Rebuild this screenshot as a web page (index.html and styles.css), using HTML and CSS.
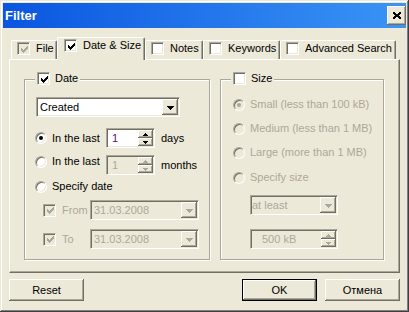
FILE: index.html
```html
<!DOCTYPE html>
<html lang="en">
<head>
<meta charset="UTF-8">
<title>Filter</title>
<link rel="stylesheet" href="styles.css">
</head>
<body>
<div class="window">
  <div class="titlebar">
    <span class="title">Filter</span>
    <div class="close raised">
      <svg width="8" height="7" viewBox="0 0 8 7"><path d="M0 0h2v1h-2z M6 0h2v1h-2z M0 1h3v1h-3z M5 1h3v1h-3z M1 2h6v1h-6z M2 3h4v1h-4z M1 4h6v1h-6z M0 5h3v1h-3z M5 5h3v1h-3z M0 6h2v1h-2z M6 6h2v1h-2z"/></svg>
    </div>
  </div>

  <div class="client">
    <div class="tabs">
      <div class="tab tab-file"><span class="check off"><svg class="tick" width="7" height="7" viewBox="0 0 7 7"><path d="M6 0h1v1h-1z M5 1h2v1h-2z M0 2h1v1h-1z M4 2h3v1h-3z M0 3h2v1h-2z M3 3h3v1h-3z M0 4h5v1h-5z M1 5h3v1h-3z M2 6h1v1h-1z"/></svg></span>File</div>
      <div class="tab tab-date active"><span class="check"><svg class="tick" width="7" height="7" viewBox="0 0 7 7"><path d="M6 0h1v1h-1z M5 1h2v1h-2z M0 2h1v1h-1z M4 2h3v1h-3z M0 3h2v1h-2z M3 3h3v1h-3z M0 4h5v1h-5z M1 5h3v1h-3z M2 6h1v1h-1z"/></svg></span>Date &amp; Size</div>
      <div class="tab tab-notes"><span class="check"></span>Notes</div>
      <div class="tab tab-keys"><span class="check"></span>Keywords</div>
      <div class="tab tab-adv"><span class="check"></span>Advanced Search</div>
    </div>

    <div class="panel">
      <div class="group group-date">
        <div class="group-title"><span class="check"><svg class="tick" width="7" height="7" viewBox="0 0 7 7"><path d="M6 0h1v1h-1z M5 1h2v1h-2z M0 2h1v1h-1z M4 2h3v1h-3z M0 3h2v1h-2z M3 3h3v1h-3z M0 4h5v1h-5z M1 5h3v1h-3z M2 6h1v1h-1z"/></svg></span>Date</div>

        <div class="combo combo-created">
          <span class="combo-text">Created</span>
          <div class="drop raised"><svg width="7" height="4" viewBox="0 0 7 4"><path d="M0 0h7v1h-1v1h-1v1h-1v1h-1v-1h-1v-1h-1v-1h-1z"/></svg></div>
        </div>

        <div class="row row-days">
          <div class="opt"><span class="radio on"></span>In the last</div>
          <div class="spin">
            <span class="spin-val">1</span>
            <div class="spin-btns">
              <div class="sbtn raised"><svg width="5" height="3" viewBox="0 0 5 3"><path d="M2 0h1v1h1v1h1v1h-5v-1h1v-1h1z"/></svg></div>
              <div class="sbtn raised"><svg width="5" height="3" viewBox="0 0 5 3"><path d="M0 0h5v1h-1v1h-1v1h-1v-1h-1v-1h-1z"/></svg></div>
            </div>
          </div>
          <span class="unit">days</span>
        </div>

        <div class="row row-months">
          <div class="opt"><span class="radio"></span>In the last</div>
          <div class="spin-wrap">
            <div class="spin off">
              <span class="spin-val">1</span>
              <div class="spin-btns">
                <div class="sbtn raised"><svg width="5" height="3" viewBox="0 0 5 3"><path d="M2 0h1v1h1v1h1v1h-5v-1h1v-1h1z"/></svg></div>
                <div class="sbtn raised"><svg width="5" height="3" viewBox="0 0 5 3"><path d="M0 0h5v1h-1v1h-1v1h-1v-1h-1v-1h-1z"/></svg></div>
              </div>
            </div>
            <span class="unit">months</span>
          </div>
        </div>

        <div class="row row-specify">
          <div class="opt opt-wide"><span class="radio"></span>Specify date</div>
        </div>

        <div class="row date-row row-from">
          <span class="check off"><svg class="tick" width="7" height="7" viewBox="0 0 7 7"><path d="M6 0h1v1h-1z M5 1h2v1h-2z M0 2h1v1h-1z M4 2h3v1h-3z M0 3h2v1h-2z M3 3h3v1h-3z M0 4h5v1h-5z M1 5h3v1h-3z M2 6h1v1h-1z"/></svg></span>
          <span class="dlabel">From</span>
          <div class="combo combo-date off">
            <span class="combo-text">31.03.2008</span>
            <div class="drop raised"><svg width="7" height="4" viewBox="0 0 7 4"><path d="M0 0h7v1h-1v1h-1v1h-1v1h-1v-1h-1v-1h-1v-1h-1z"/></svg></div>
          </div>
        </div>

        <div class="row date-row row-to">
          <span class="check off"><svg class="tick" width="7" height="7" viewBox="0 0 7 7"><path d="M6 0h1v1h-1z M5 1h2v1h-2z M0 2h1v1h-1z M4 2h3v1h-3z M0 3h2v1h-2z M3 3h3v1h-3z M0 4h5v1h-5z M1 5h3v1h-3z M2 6h1v1h-1z"/></svg></span>
          <span class="dlabel">To</span>
          <div class="combo combo-date off">
            <span class="combo-text">31.03.2008</span>
            <div class="drop raised"><svg width="7" height="4" viewBox="0 0 7 4"><path d="M0 0h7v1h-1v1h-1v1h-1v1h-1v-1h-1v-1h-1v-1h-1z"/></svg></div>
          </div>
        </div>
      </div>

      <div class="group group-size">
        <div class="group-title"><span class="check"></span>Size</div>

        <div class="opt size-opt first"><span class="radio on off"></span>Small (less than 100 kB)</div>
        <div class="opt size-opt"><span class="radio off"></span>Medium (less than 1 MB)</div>
        <div class="opt size-opt"><span class="radio off"></span>Large (more than 1 MB)</div>
        <div class="opt size-opt last"><span class="radio off"></span>Specify size</div>

        <div class="combo combo-least off">
          <span class="combo-text">at least</span>
          <div class="drop raised"><svg width="7" height="4" viewBox="0 0 7 4"><path d="M0 0h7v1h-1v1h-1v1h-1v1h-1v-1h-1v-1h-1v-1h-1z"/></svg></div>
        </div>

        <div class="spin spin-size off">
          <span class="spin-val">500 kB</span>
          <div class="spin-btns">
            <div class="sbtn raised"><svg width="5" height="3" viewBox="0 0 5 3"><path d="M2 0h1v1h1v1h1v1h-5v-1h1v-1h1z"/></svg></div>
            <div class="sbtn raised"><svg width="5" height="3" viewBox="0 0 5 3"><path d="M0 0h5v1h-1v1h-1v1h-1v-1h-1v-1h-1z"/></svg></div>
          </div>
        </div>
      </div>
    </div>

    <div class="buttons">
      <div class="btn raised">Reset</div>
      <div class="btn btn-default">OK</div>
      <div class="btn raised">Отмена</div>
    </div>
  </div>
</div>
</body>
</html>
```

FILE: styles.css
```css
body {
    margin: 0;
    font-family: "Liberation Sans", Arial, sans-serif;
    font-size: 11px;
    color: #000;
}

.window {
    width: 409px;
    height: 312px;
    box-sizing: border-box;
    padding: 3px;
    background: #ece9d8;
    box-shadow: inset -1px -1px #404040, inset 1px 1px #ece9d8,
                inset -2px -2px #808080, inset 2px 2px #fff;
}

/* title bar */
.titlebar {
    height: 25px;
    display: flex;
    align-items: center;
    justify-content: space-between;
    padding: 0 0 0 2px;
    background: linear-gradient(to right, #0a56e0, #3b94f5);
}
.title {
    color: #fff;
    font-weight: bold;
    font-size: 13px;
}
.close {
    width: 19px;
    height: 19px;
    box-sizing: border-box;
    display: flex;
    align-items: center;
    justify-content: center;
}

.raised {
    background: #ece9d8;
    box-shadow: inset -1px -1px #716f64, inset 1px 1px #fff,
                inset -2px -2px #aca899, inset 2px 2px #ece9d8;
}

.client {
    padding: 9px 6px 0;
}

/* tabs */
.tabs {
    display: flex;
    align-items: flex-end;
    height: 22px;
    padding-left: 2px;
}
.tab {
    box-sizing: border-box;
    height: 19px;
    border: 1px solid #fff;
    border-bottom: 0;
    border-right-color: #716f64;
    border-radius: 2px 2px 0 0;
    box-shadow: inset -1px 0 #aca899;
    display: flex;
    align-items: flex-start;
    gap: 6px;
    padding: 1px 0 0 5px;
    line-height: 13px;
    white-space: nowrap;
}
.tab.active {
    height: 23px;
    margin-bottom: -1px;
    padding-left: 6px;
    position: relative;
    z-index: 1;
    background: #ece9d8;
}
.tab-file { width: 46px; }
.tab-date { width: 88px; }
.tab-notes { width: 58px; }
.tab-keys { width: 77px; }
.tab-adv { width: 116px; }

/* checkbox + radio */
.check {
    width: 13px;
    height: 13px;
    flex: none;
    box-sizing: border-box;
    border: 1px solid;
    border-color: #aca899 #fff #fff #aca899;
    box-shadow: inset 1px 1px #716f64, inset -1px -1px #ece9d8;
    background: #fff;
    display: flex;
    align-items: center;
    justify-content: center;
    padding: 1px 0 0 1px;
}
.check.off {
    background: #ece9d8;
    color: #aca899;
}
.tick {
    fill: currentColor;
}

.radio {
    width: 12px;
    height: 12px;
    flex: none;
    box-sizing: border-box;
    border-radius: 50%;
    border: 1px solid;
    border-color: #aca899 #fff #fff #aca899;
    box-shadow: inset 1px 1px #716f64, inset -1px -1px #ece9d8;
    background: #fff;
    display: flex;
    align-items: center;
    justify-content: center;
}
.radio.on::after {
    content: "";
    width: 4px;
    height: 4px;
    border-radius: 50%;
    background: #000;
}
.radio.off {
    background: #ece9d8;
}
.radio.on.off::after {
    background: #aca899;
}

/* panel */
.panel {
    height: 214px;
    box-sizing: border-box;
    border: 1px solid #fff;
    border-right-color: #716f64;
    border-bottom-color: #716f64;
    box-shadow: inset -1px -1px #aca899;
    display: flex;
    gap: 10px;
    padding: 19px 15px 0 14px;
}

.group {
    position: relative;
    box-sizing: border-box;
    height: 181px;
    border: 1px solid #aca899;
    box-shadow: inset 1px 1px #fff, 1px 1px #fff;
}
.group-date {
    width: 186px;
    padding: 17px 0 0 10px;
}
.group-size {
    width: 164px;
    padding: 18px 0 0 12px;
    color: #aca899;
}
.group-title {
    position: absolute;
    top: -8px;
    left: 10px;
    height: 13px;
    line-height: 13px;
    padding: 0 2px;
    background: #ece9d8;
    color: #000;
    display: flex;
    align-items: center;
    gap: 5px;
}

/* combo boxes */
.combo {
    box-sizing: border-box;
    height: 20px;
    border: 1px solid;
    border-color: #aca899 #fff #fff #aca899;
    box-shadow: inset 1px 1px #716f64, inset -1px -1px #ece9d8;
    background: #fff;
    padding: 1px;
    display: flex;
}
.combo-text {
    flex: 1;
    line-height: 16px;
    padding-left: 2px;
}
.drop {
    width: 16px;
    height: 16px;
    display: flex;
    align-items: center;
    justify-content: center;
    padding-top: 1px;
    box-sizing: border-box;
}
.combo.off {
    background: #ece9d8;
    color: #aca899;
}
.combo.off svg,
.spin.off svg {
    fill: #aca899;
}
.combo-created {
    width: 144px;
    margin-left: 1px;
}
.combo-date {
    width: 109px;
}
.combo-least {
    width: 88px;
    margin: 11px 0 0 17px;
}
.combo-least .combo-text {
    padding-left: 0;
}

/* spin edits */
.spin {
    width: 49px;
    height: 20px;
    flex: none;
    box-sizing: border-box;
    border: 1px solid;
    border-color: #aca899 #fff #fff #aca899;
    box-shadow: inset 1px 1px #716f64, inset -1px -1px #ece9d8;
    background: #fff;
    padding: 1px;
    display: flex;
}
.spin-val {
    flex: 1;
    line-height: 16px;
    padding-left: 4px;
    color: #50107a;
}
.spin.off {
    background: #ece9d8;
}
.spin.off .spin-val {
    color: #aca899;
}
.spin-btns {
    width: 15px;
    display: flex;
    flex-direction: column;
}
.sbtn {
    height: 8px;
    display: flex;
    align-items: center;
    justify-content: center;
}
.spin-size {
    width: 88px;
    margin: 14px 0 0 17px;
}
.spin-size .spin-val {
    padding-left: 10px;
}

/* rows in date group */
.row {
    display: flex;
    align-items: center;
}
.opt {
    display: flex;
    align-items: center;
    gap: 5px;
    height: 13px;
    line-height: 13px;
    white-space: nowrap;
}
.row .opt {
    width: 71px;
}
.row .opt-wide {
    width: auto;
}
.row-days {
    margin-top: 11px;
    height: 20px;
}
.row-months {
    margin-top: 7px;
    align-items: flex-start;
}
.spin-wrap {
    display: flex;
    align-items: center;
}
.unit {
    margin-left: 6px;
}
.row-specify {
    margin-top: 5px;
}
.date-row {
    padding-left: 8px;
    color: #aca899;
}
.row-from {
    margin-top: 7px;
}
.row-to {
    margin-top: 9px;
}
.dlabel {
    width: 28px;
    margin-left: 6px;
}

/* size options */
.size-opt {
    margin-top: 11px;
}
.size-opt.first {
    margin-top: 0;
}
.size-opt.last {
    margin-top: 12px;
}

/* bottom buttons */
.buttons {
    display: flex;
    gap: 8px;
    margin-top: 6px;
}
.btn {
    width: 75px;
    height: 22px;
    box-sizing: border-box;
    display: flex;
    align-items: center;
    justify-content: center;
}
.btn-default {
    margin-left: auto;
    border: 1px solid #000;
    background: #ece9d8;
    box-shadow: inset -1px -1px #716f64, inset 1px 1px #fff,
                inset -2px -2px #aca899;
}
```
